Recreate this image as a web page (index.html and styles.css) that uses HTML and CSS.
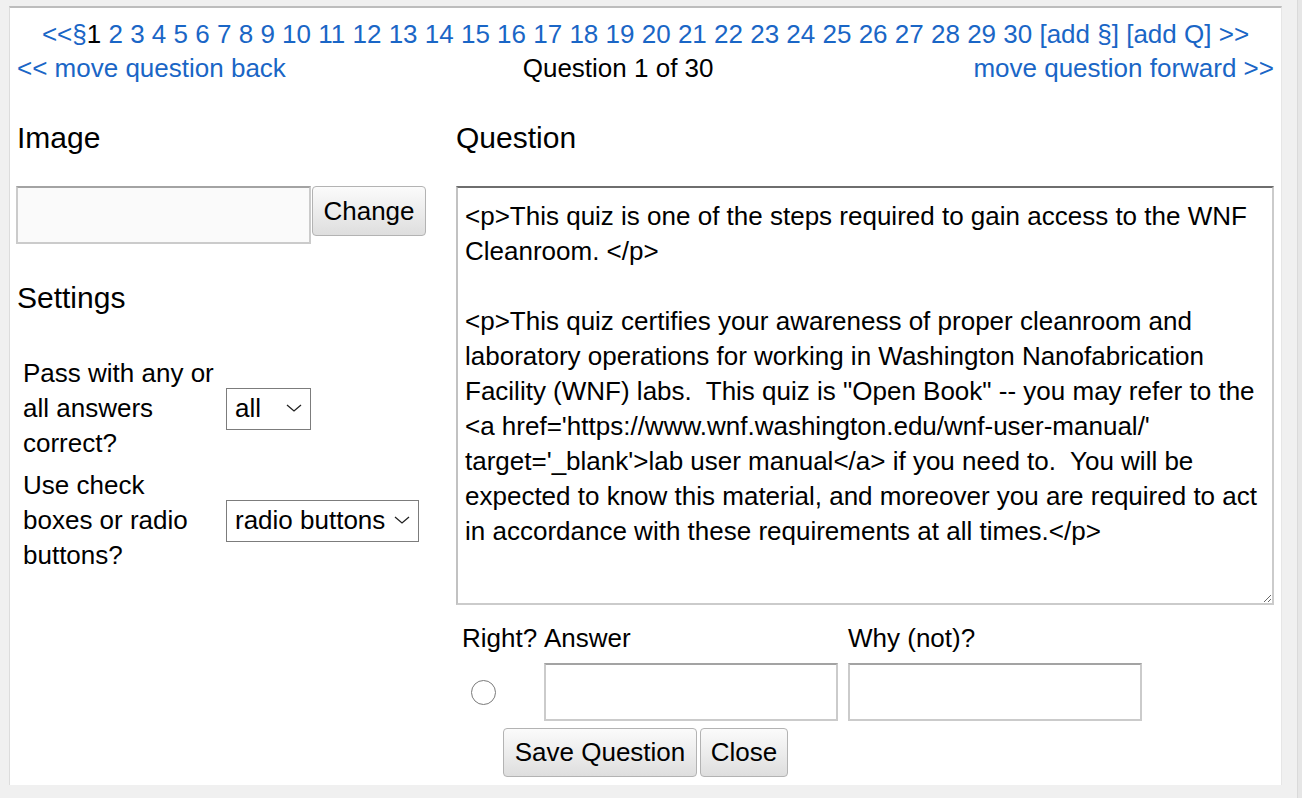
FILE: index.html
```html
<!DOCTYPE html>
<html>
<head>
<meta charset="utf-8">
<link rel="stylesheet" href="styles.css">
</head>
<body>
<div class="page">
  <div class="panel">
    <div class="nav-top"><a href="#">&lt;&lt;</a><a href="#">§</a><span class="cur">1</span> <a href="#">2</a> <a href="#">3</a> <a href="#">4</a> <a href="#">5</a> <a href="#">6</a> <a href="#">7</a> <a href="#">8</a> <a href="#">9</a> <a href="#">10</a> <a href="#">11</a> <a href="#">12</a> <a href="#">13</a> <a href="#">14</a> <a href="#">15</a> <a href="#">16</a> <a href="#">17</a> <a href="#">18</a> <a href="#">19</a> <a href="#">20</a> <a href="#">21</a> <a href="#">22</a> <a href="#">23</a> <a href="#">24</a> <a href="#">25</a> <a href="#">26</a> <a href="#">27</a> <a href="#">28</a> <a href="#">29</a> <a href="#">30</a> <a href="#">[add §]</a> <a href="#">[add Q]</a> <a href="#">&gt;&gt;</a></div>
    <div class="nav-move">
      <a href="#">&lt;&lt; move question back</a>
      <span class="qcount">Question 1 of 30</span>
      <a href="#">move question forward &gt;&gt;</a>
    </div>
    <div class="columns">
      <div class="left">
        <h3 class="heading">Image</h3>
        <div class="image-row">
          <input class="image-input" type="text">
          <button class="btn btn-change">Change</button>
        </div>
        <h3 class="heading settings-heading">Settings</h3>
        <div class="settings">
          <div class="setting-label">Pass with any or all answers correct?</div>
          <div class="setting-control">
            <span class="select-wrap">
              <select class="select select-all"><option>all</option><option>any</option></select>
              <svg class="chev" width="16" height="8" viewBox="0 0 16 8"><path d="M1 1 L8 7 L15 1" fill="none" stroke="#222" stroke-width="1.3"/></svg>
            </span>
          </div>
          <div class="setting-label">Use check boxes or radio buttons?</div>
          <div class="setting-control">
            <span class="select-wrap">
              <select class="select select-type"><option>radio buttons</option><option>check boxes</option></select>
              <svg class="chev" width="16" height="8" viewBox="0 0 16 8"><path d="M1 1 L8 7 L15 1" fill="none" stroke="#222" stroke-width="1.3"/></svg>
            </span>
          </div>
        </div>
      </div>
      <div class="right">
        <h3 class="heading">Question</h3>
        <textarea class="question-text">&lt;p&gt;This quiz is one of the steps required to gain access to the WNF
Cleanroom. &lt;/p&gt;

&lt;p&gt;This quiz certifies your awareness of proper cleanroom and
laboratory operations for working in Washington Nanofabrication
Facility (WNF) labs.  This quiz is "Open Book" -- you may refer to the
&lt;a href='https://www.wnf.washington.edu/wnf-user-manual/'
target='_blank'&gt;lab user manual&lt;/a&gt; if you need to.  You will be
expected to know this material, and moreover you are required to act
in accordance with these requirements at all times.&lt;/p&gt;</textarea>
        <div class="answers">
          <div class="ans-label">Right?</div>
          <div class="ans-label">Answer</div>
          <div class="ans-label">Why (not)?</div>
          <div class="ans-radio"><input class="radio" type="radio" name="right"></div>
          <input class="ans-input" type="text">
          <input class="ans-input" type="text">
        </div>
      </div>
    </div>
    <div class="actions">
      <button class="btn btn-save">Save Question</button>
      <button class="btn btn-close">Close</button>
    </div>
  </div>
  <div class="scroll-strip"></div>
</div>
</body>
</html>
```
FILE: styles.css
```css
html, body {
  margin: 0;
  padding: 0;
}
body {
  background: #f0f0f0;
  font-family: "Liberation Sans", Arial, Helvetica, sans-serif;
  font-size: 26px;
  color: #000;
  min-height: 100vh;
}
.page {
  display: flex;
  align-items: flex-start;
  min-height: 798px;
}
.panel {
  flex: 1;
  margin: 6px 15px 0 9px;
  background: #fff;
  border-top: 2px solid #bdbdbd;
  border-left: 1px solid #dcdcdc;
  border-right: 1px solid #e6e6e6;
  padding: 9px 7px 8px 7px;
}
.scroll-strip {
  align-self: stretch;
  width: 4px;
  background: #e6e6e6;
  border-left: 1px solid #dadada;
}
a {
  color: #1a66c6;
  text-decoration: none;
}
.nav-top {
  text-align: center;
  line-height: 34px;
  white-space: nowrap;
}
.cur {
  color: #000;
}
.nav-move {
  display: flex;
  justify-content: space-between;
  line-height: 34px;
}
.qcount {
  margin-right: 23px;
}
.columns {
  display: grid;
  grid-template-columns: 409px 818px;
  column-gap: 30px;
  margin-top: 35px;
}
.heading {
  margin: 0;
  font-size: 30px;
  font-weight: normal;
  line-height: 35px;
}
.image-row {
  display: flex;
  align-items: flex-start;
  gap: 1px;
  margin: 31px 0 0 -1px;
}
.image-input {
  box-sizing: border-box;
  width: 295px;
  height: 58px;
  margin: 0;
  background: #fafafa;
  border: 2px solid #cbcbcb;
  border-top-color: #a3a3a3;
  font: inherit;
}
.btn {
  box-sizing: border-box;
  height: 50px;
  margin: 0;
  padding: 0 8px;
  font: inherit;
  color: #000;
  background: linear-gradient(#fbfbfb, #dedede);
  border: 1px solid #b3b3b3;
  border-radius: 4px;
  white-space: nowrap;
}
.btn-change {
  width: 114px;
}
.settings-heading {
  margin-top: 36px;
}
.settings {
  display: grid;
  grid-template-columns: 194px auto;
  column-gap: 9px;
  row-gap: 7px;
  padding-left: 6px;
  margin-top: 41px;
  line-height: 35px;
}
.setting-control {
  display: flex;
  align-items: center;
}
.select-wrap {
  position: relative;
  display: inline-block;
}
.select {
  -webkit-appearance: none;
  appearance: none;
  box-sizing: border-box;
  height: 42px;
  margin: 0;
  padding: 0 0 0 8px;
  font: inherit;
  color: #000;
  background: #fff;
  border: 1px solid #7c7c7c;
  border-radius: 0;
  display: block;
}
.select-all {
  width: 85px;
}
.select-type {
  width: 193px;
}
.chev {
  position: absolute;
  right: 9px;
  top: 16px;
  pointer-events: none;
}
.question-text {
  display: block;
  box-sizing: border-box;
  width: 818px;
  height: 419px;
  margin: 31px 0 0 0;
  padding: 11px 7px 6px 7px;
  font: inherit;
  line-height: 35px;
  color: #000;
  background: #fff;
  border: 2px solid #cbcbcb;
  border-top-color: #6e6e6e;
  border-left-color: #c2c2c2;
  white-space: pre-wrap;
  overflow: hidden;
}
.answers {
  display: grid;
  grid-template-columns: 72px 294px 294px;
  column-gap: 10px;
  row-gap: 7px;
  align-items: center;
  margin: 16px 0 0 6px;
}
.ans-label {
  line-height: 35px;
  white-space: nowrap;
}
.ans-radio {
  display: flex;
  align-items: center;
}
.radio {
  -webkit-appearance: none;
  appearance: none;
  box-sizing: border-box;
  width: 25px;
  height: 25px;
  margin: 0 0 0 9px;
  border: 1.5px solid #7a7a7a;
  border-radius: 50%;
  background: #fff;
}
.ans-input {
  box-sizing: border-box;
  width: 100%;
  height: 58px;
  margin: 0;
  background: #fff;
  border: 2px solid #cbcbcb;
  border-top-color: #a3a3a3;
  font: inherit;
}
.actions {
  display: flex;
  justify-content: center;
  gap: 3px;
  margin-top: 7px;
}
.btn-save {
  width: 194px;
  height: 49px;
}
.btn-close {
  width: 88px;
  height: 49px;
}
```
